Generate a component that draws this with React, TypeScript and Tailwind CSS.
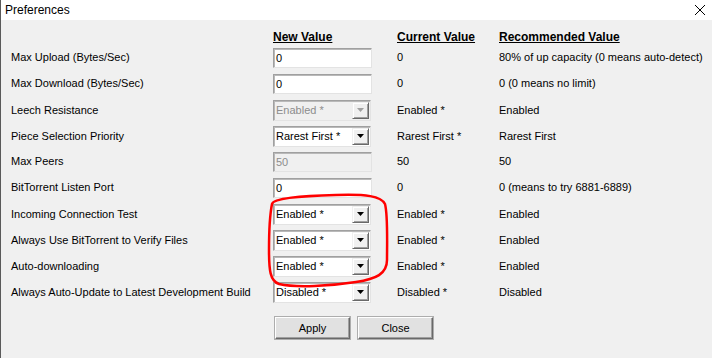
import React from 'react';

type Widget =
  | { kind: 'input'; value: string; disabled?: boolean }
  | { kind: 'combo'; value: string; disabled?: boolean };

type Row = {
  label: string;
  widget: Widget;
  current: string;
  recommended: string;
};

const rows: Row[] = [
  { label: 'Max Upload (Bytes/Sec)', widget: { kind: 'input', value: '0' }, current: '0', recommended: '80% of up capacity (0 means auto-detect)' },
  { label: 'Max Download (Bytes/Sec)', widget: { kind: 'input', value: '0' }, current: '0', recommended: '0 (0 means no limit)' },
  { label: 'Leech Resistance', widget: { kind: 'combo', value: 'Enabled *', disabled: true }, current: 'Enabled *', recommended: 'Enabled' },
  { label: 'Piece Selection Priority', widget: { kind: 'combo', value: 'Rarest First *' }, current: 'Rarest First *', recommended: 'Rarest First' },
  { label: 'Max Peers', widget: { kind: 'input', value: '50', disabled: true }, current: '50', recommended: '50' },
  { label: 'BitTorrent Listen Port', widget: { kind: 'input', value: '0' }, current: '0', recommended: '0 (means to try 6881-6889)' },
  { label: 'Incoming Connection Test', widget: { kind: 'combo', value: 'Enabled *' }, current: 'Enabled *', recommended: 'Enabled' },
  { label: 'Always Use BitTorrent to Verify Files', widget: { kind: 'combo', value: 'Enabled *' }, current: 'Enabled *', recommended: 'Enabled' },
  { label: 'Auto-downloading', widget: { kind: 'combo', value: 'Enabled *' }, current: 'Enabled *', recommended: 'Enabled' },
  { label: 'Always Auto-Update to Latest Development Build', widget: { kind: 'combo', value: 'Disabled *' }, current: 'Disabled *', recommended: 'Disabled' },
];

function TextBox({ value, disabled }: { value: string; disabled?: boolean }) {
  return (
    <div
      className={`w-[99px] h-[20px] flex items-center pl-[2px] border border-t-[#a0a0a0] border-l-[#a0a0a0] border-b-[#e3e3e3] border-r-[#e3e3e3] shadow-[inset_1px_1px_0_#b9b9b9] ${
        disabled ? 'bg-[#f0f0f0] text-[#8d8d8d]' : 'bg-white text-black'
      }`}
    >
      {value}
    </div>
  );
}

function ComboBox({ value, disabled }: { value: string; disabled?: boolean }) {
  return (
    <div
      className={`w-[98px] h-[21px] flex items-center pl-[2px] pr-[1px] border border-t-[#a0a0a0] border-l-[#a0a0a0] border-b-[#e3e3e3] border-r-[#e3e3e3] shadow-[inset_1px_1px_0_#b9b9b9] ${
        disabled ? 'bg-[#f0f0f0] text-[#8d8d8d]' : 'bg-white text-black'
      }`}
    >
      <span className="flex-1">{value}</span>
      <div className="w-[17px] h-[17px] flex items-center justify-center bg-[#f0f0f0] border border-t-[#f0f0f0] border-l-[#f0f0f0] border-b-[#696969] border-r-[#696969] shadow-[inset_1px_1px_0_#fff,inset_-1px_-1px_0_#a0a0a0]">
        <svg width="7" height="4" viewBox="0 0 7 4">
          <path d="M0 0 H7 L3.5 4 Z" fill={disabled ? '#a0a0a0' : '#000'} />
        </svg>
      </div>
    </div>
  );
}

function Button({ children }: { children: React.ReactNode }) {
  return (
    <button className="h-[22px] w-[75px] bg-[#e1e1e1] border border-t-[#fff] border-l-[#fff] border-b-[#696969] border-r-[#696969] shadow-[inset_-1px_-1px_0_#a0a0a0,0_0_0_1px_#adadad] text-black">
      {children}
    </button>
  );
}

export default function App() {
  return (
    <div
      className="relative w-[712px] h-[358px] overflow-hidden bg-[#f0f0f0] border-l border-[#5a5a5a] text-[11px] text-black"
      style={{ fontFamily: '"Liberation Sans", Arial, sans-serif' }}
    >
      {/* Title bar */}
      <div className="h-[20px] bg-white flex items-center justify-between pl-[4px] pr-[6px]">
        <span className="text-[12px]">Preferences</span>
        <svg width="12" height="12" viewBox="0 0 12 12">
          <path d="M1 1 L11 11 M11 1 L1 11" stroke="#000" strokeWidth="1" />
        </svg>
      </div>

      <div className="pl-[10px] pt-[8px]">
        {/* Column headers */}
        <div className="grid grid-cols-[262px_124px_102px_1fr] h-[17px] items-center font-bold underline text-[12px]">
          <div />
          <div>New Value</div>
          <div>Current Value</div>
          <div>Recommended Value</div>
        </div>

        {rows.map((row) => {
          const shift = row.widget.kind === 'combo' ? 'mt-0' : '-mt-[2px]';
          return (
            <div key={row.label} className="grid grid-cols-[262px_124px_102px_1fr] h-[26px] items-center">
              <div className={shift}>{row.label}</div>
              <div>
                {row.widget.kind === 'input' ? (
                  <TextBox value={row.widget.value} disabled={row.widget.disabled} />
                ) : (
                  <ComboBox value={row.widget.value} disabled={row.widget.disabled} />
                )}
              </div>
              <div className={shift}>{row.current}</div>
              <div className={shift}>{row.recommended}</div>
            </div>
          );
        })}

        <div className="flex gap-[8px] pl-[264px] mt-[12px]">
          <Button>Apply</Button>
          <Button>Close</Button>
        </div>
      </div>

      {/* Hand-drawn red annotation */}
      <svg className="absolute left-0 top-0 pointer-events-none" width="712" height="358">
        <path
          d="M271 204 C272 198 300 196 335 195 C365 194 380 196 384 204 C387 215 386 245 386 260 C386 274 375 279 355 282 C330 286 295 288 278 284 C269 281 268 270 268 250 C268 230 269 214 271 204"
          fill="none"
          stroke="#ff0000"
          strokeWidth="2.5"
          strokeLinecap="round"
        />
      </svg>
    </div>
  );
}
